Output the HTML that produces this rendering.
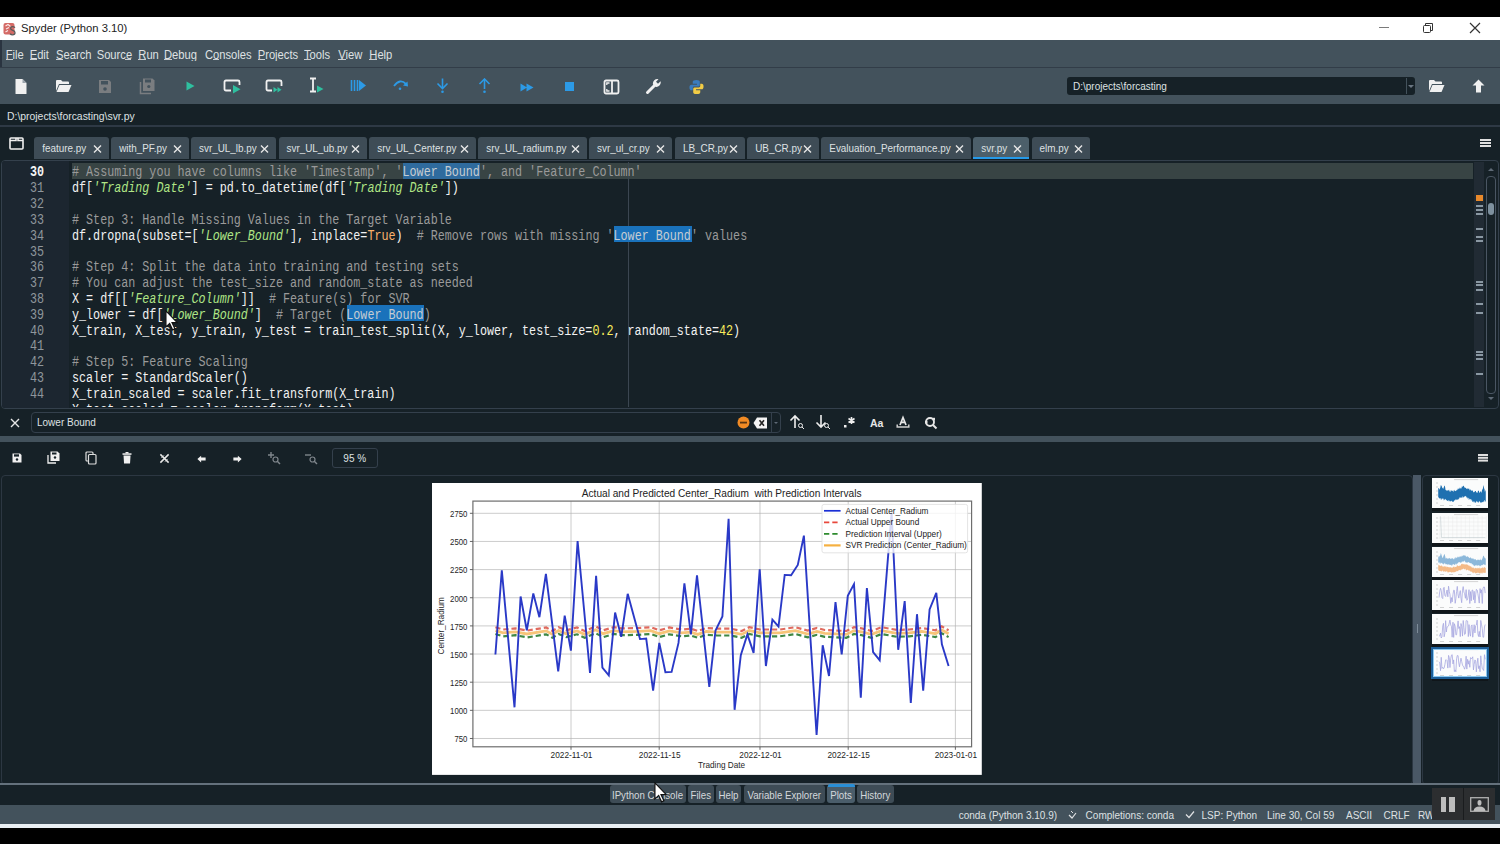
<!DOCTYPE html><html><head><meta charset="utf-8"><style>
*{margin:0;padding:0;box-sizing:border-box}
html,body{width:1500px;height:844px;overflow:hidden;background:#000}
body{position:relative;font-family:"Liberation Sans",sans-serif;color:#e0e1e3}
.a{position:absolute}
.ui{font-family:"Liberation Sans",sans-serif;white-space:nowrap}
.mono{font-family:"Liberation Mono",monospace;white-space:pre}
.menu span{position:absolute;top:0;font-size:11.2px;color:#dfe1e3;transform:scaleY(1.16);transform-origin:0 0}
.tab{position:absolute;top:137px;height:22px;background:#3e4c56;border-radius:3px 3px 0 0;font-size:9.9px;color:#dfe1e3}
.tab .t{position:absolute;left:8px;top:5.5px;transform:scaleY(1.14);transform-origin:0 9px}
.tab .x{position:absolute;top:6.5px;width:9px;height:10px}
.ln{position:absolute;left:0;width:44px;text-align:right;color:#8f969c;font-size:11.73px;transform:scaleY(1.2);transform-origin:0 0}
.cl{position:absolute;left:72px;font-size:11.73px;color:#f2f2f2;transform:scaleY(1.2);transform-origin:0 0}
.c{color:#9a9a9a}
.s{color:#b0e686;font-style:italic}
.b{color:#fab16c}
.n{color:#faed5c}
.hl{background:#1a72bb}
.tk{position:absolute;font-size:8px;color:#262626}
</style></head><body>
<div class="a" style="left:0;top:17px;width:1500px;height:23px;background:#fff"></div>
<svg class="a" style="left:3px;top:22px" width="13" height="14" viewBox="0 0 13 14">
<rect x="0.5" y="1" width="11" height="11.5" rx="2" fill="#d46a66"/>
<path d="M2.5 4 L5 2.5 L7.5 4.5 M3 7 L6 5.5 M2.5 10 L5 8.5" stroke="#fbe9e8" stroke-width="1.1" fill="none"/>
<path d="M12 5.6 Q11 4.6 9.5 4.6 Q7.6 4.6 7.6 6.3 Q7.6 7.8 9.8 8.4 Q12 9 12 10.7 Q12 12.8 9.6 12.8 Q8 12.8 7 11.8" stroke="#5a5a5a" stroke-width="1.3" fill="none"/></svg>
<div class="a ui" style="left:21px;top:22px;font-size:11.25px;color:#222">Spyder (Python 3.10)</div>
<div class="a" style="left:1379px;top:27px;width:9.5px;height:1.3px;background:#7a7a7a"></div>
<svg class="a" style="left:1422px;top:22px" width="12" height="12" viewBox="0 0 12 12"><rect x="1.5" y="3.5" width="7" height="7" rx="1" fill="none" stroke="#333"/><path d="M3.5 3.5 V1.5 H10.5 V8.5 H8.5" fill="none" stroke="#333"/></svg>
<svg class="a" style="left:1469px;top:22px" width="12" height="12" viewBox="0 0 12 12"><path d="M1 1 L11 11 M11 1 L1 11" stroke="#333" stroke-width="1.2"/></svg>
<div class="a" style="left:0;top:40px;width:1500px;height:27px;background:#43525c"></div>
<div class="a" style="left:0;top:40px;width:2px;height:27px;background:#2a3440"></div>
<div class="a" style="left:0;top:67px;width:1500px;height:1px;background:#323d48"></div>
<div class="a menu" style="left:0;top:46.5px;width:500px;height:16px">
<span style="left:5.7px">File</span>
<span style="left:29.7px">Edit</span>
<span style="left:56px">Search</span>
<span style="left:96.7px">Source</span>
<span style="left:138.3px">Run</span>
<span style="left:164px">Debug</span>
<span style="left:205px">Consoles</span>
<span style="left:257.7px">Projects</span>
<span style="left:304px">Tools</span>
<span style="left:338.3px">View</span>
<span style="left:369.3px">Help</span>
</div>
<div class="a" style="left:5.7px;top:59.2px;width:7px;height:1px;background:#c9cdd0"></div>
<div class="a" style="left:29.7px;top:59.2px;width:7px;height:1px;background:#c9cdd0"></div>
<div class="a" style="left:56px;top:59.2px;width:7px;height:1px;background:#c9cdd0"></div>
<div class="a" style="left:124.7px;top:59.2px;width:6px;height:1px;background:#c9cdd0"></div>
<div class="a" style="left:138.3px;top:59.2px;width:8px;height:1px;background:#c9cdd0"></div>
<div class="a" style="left:164px;top:59.2px;width:8px;height:1px;background:#c9cdd0"></div>
<div class="a" style="left:213px;top:59.2px;width:6px;height:1px;background:#c9cdd0"></div>
<div class="a" style="left:257.7px;top:59.2px;width:7px;height:1px;background:#c9cdd0"></div>
<div class="a" style="left:304px;top:59.2px;width:7px;height:1px;background:#c9cdd0"></div>
<div class="a" style="left:338.3px;top:59.2px;width:8px;height:1px;background:#c9cdd0"></div>
<div class="a" style="left:369.3px;top:59.2px;width:8px;height:1px;background:#c9cdd0"></div>
<div class="a" style="left:0;top:68px;width:1500px;height:36px;background:#43525c"></div>
<svg class="a" style="left:14px;top:78px" width="14" height="17" viewBox="0 0 14 17"><path d="M1.5 1 H8.5 L12.5 5 V15.5 Q12.5 16 12 16 H2 Q1.5 16 1.5 15.5 Z" fill="#f0f0f0"/><path d="M8.5 1 V5 H12.5" fill="#9aa3ab"/></svg>
<svg class="a" style="left:55px;top:79px" width="17" height="14" viewBox="0 0 17 14"><path d="M1 2 Q1 1 2 1 H6 L7.5 2.5 H13 Q14 2.5 14 3.5 V5 H4 L1 12 Z" fill="#f0f0f0"/><path d="M4.5 6 H16.5 L13.5 13 H1.5 Z" fill="#f0f0f0"/></svg>
<svg class="a" style="left:98px;top:79px" width="14" height="15" viewBox="0 0 14 15"><path d="M1 1 H11 L13 3 V14 H1 Z" fill="#7a7d80"/><rect x="3" y="2" width="7" height="3.5" fill="#43525c"/><circle cx="7" cy="10" r="1.8" fill="#43525c"/></svg>
<svg class="a" style="left:139px;top:77px" width="17" height="18" viewBox="0 0 17 18"><path d="M1.5 5 V16.5 H12" fill="none" stroke="#7a7d80" stroke-width="1.5"/><path d="M4 1.5 H13.5 L15.5 3.5 V14 H4 Z" fill="#7a7d80"/><rect x="6" y="2.5" width="6" height="3" fill="#43525c"/><circle cx="9.8" cy="9.5" r="1.6" fill="#43525c"/></svg>
<svg class="a" style="left:186px;top:81px" width="9" height="10" viewBox="0 0 9 10"><path d="M0.5 0.5 L8.5 5 L0.5 9.5 Z" fill="#2fbf9f"/></svg>
<svg class="a" style="left:223px;top:79px" width="19" height="15" viewBox="0 0 19 15"><path d="M8 11.5 H3 Q1.5 11.5 1.5 10 V3 Q1.5 1.5 3 1.5 H15 Q16.5 1.5 16.5 3 V6" fill="none" stroke="#f0f0f0" stroke-width="1.8"/><path d="M10 6 L17.5 10.3 L10 14.5 Z" fill="#2fbf9f"/></svg>
<svg class="a" style="left:265px;top:79px" width="19" height="15" viewBox="0 0 19 15"><path d="M7 11.5 H3 Q1.5 11.5 1.5 10 V3 Q1.5 1.5 3 1.5 H15 Q16.5 1.5 16.5 3 V7" fill="none" stroke="#f0f0f0" stroke-width="1.8"/><path d="M8.5 8 L12.5 10.8 L8.5 13.5 Z M12.5 8 L16.5 10.8 L12.5 13.5 Z" fill="#2fbf9f"/></svg>
<svg class="a" style="left:308px;top:77px" width="17" height="17" viewBox="0 0 17 17"><path d="M2 1.5 H8 M5 1.5 V14.5 M2 14.5 H8" fill="none" stroke="#f0f0f0" stroke-width="1.8"/><path d="M9 8.5 L15.5 12 L9 15.5 Z" fill="#2fbf9f"/></svg>
<svg class="a" style="left:350px;top:79px" width="17" height="13" viewBox="0 0 17 13"><path d="M1.5 1 V12 M4.5 1 V12 M7.5 1 V12" stroke="#2c9ae6" stroke-width="1.6"/><path d="M9 1 L16 6.5 L9 12 Z" fill="#2c9ae6"/></svg>
<svg class="a" style="left:392px;top:78px" width="17" height="13" viewBox="0 0 17 13"><path d="M2 8 Q8 0 14 6" fill="none" stroke="#2c9ae6" stroke-width="1.8"/><path d="M11 7.5 L16 8.5 L15.5 3.5 Z" fill="#2c9ae6"/><circle cx="8" cy="10.8" r="1.3" fill="#2c9ae6"/></svg>
<svg class="a" style="left:436px;top:78px" width="13" height="16" viewBox="0 0 13 16"><path d="M6.5 0.5 V10" stroke="#2c9ae6" stroke-width="1.6"/><path d="M1.5 5.5 L6.5 10.5 L11.5 5.5" fill="none" stroke="#2c9ae6" stroke-width="1.6"/><circle cx="6.5" cy="13.8" r="1.3" fill="#2c9ae6"/></svg>
<svg class="a" style="left:478px;top:78px" width="13" height="16" viewBox="0 0 13 16"><path d="M6.5 1.5 V11" stroke="#2c9ae6" stroke-width="1.6"/><path d="M1.5 6 L6.5 1 L11.5 6" fill="none" stroke="#2c9ae6" stroke-width="1.6"/><circle cx="6.5" cy="13.8" r="1.3" fill="#2c9ae6"/></svg>
<svg class="a" style="left:520px;top:83px" width="14" height="9" viewBox="0 0 14 9"><path d="M0.5 0.5 L7 4.5 L0.5 8.5 Z M6.5 0.5 L13.5 4.5 L6.5 8.5 Z" fill="#2c9ae6"/></svg>
<div class="a" style="left:565px;top:82px;width:9px;height:8.5px;background:#2c9ae6"></div>
<svg class="a" style="left:603px;top:78.5px" width="17" height="16" viewBox="0 0 17 16"><rect x="1.5" y="1.5" width="14" height="13" rx="1.5" fill="none" stroke="#f0f0f0" stroke-width="1.8"/><path d="M9 1.5 V14.5" stroke="#f0f0f0" stroke-width="1.8"/><path d="M6.5 4 H3.8 V6 M6.5 12 H3.8 V10" fill="none" stroke="#f0f0f0" stroke-width="1.3"/></svg>
<svg class="a" style="left:645px;top:78px" width="17" height="17" viewBox="0 0 17 17"><path d="M2.5 14.5 L9 8" stroke="#f0f0f0" stroke-width="3" stroke-linecap="round"/><path d="M8 6.5 A4.5 4.5 0 0 1 13.5 1.2 L11 3.8 L13 5.8 L15.6 3.3 A4.5 4.5 0 0 1 10.3 8.8 Z" fill="#f0f0f0"/></svg>
<svg class="a" style="left:689px;top:78.5px" width="15" height="16" viewBox="0 0 16 17"><path d="M8 1 Q4 1 4 3 V5 H8.5 V6 H2.5 Q0.5 6 0.5 9 Q0.5 12 2.5 12 H4 V9.5 Q4 8 5.5 8 H10 Q11.5 8 11.5 6.5 V3 Q11.5 1 8 1 Z" fill="#3a7cc0"/><path d="M8 16 Q12 16 12 14 V12 H7.5 V11 H13.5 Q15.5 11 15.5 8 Q15.5 5 13.5 5 H12 V7.5 Q12 9 10.5 9 H6 Q4.5 9 4.5 10.5 V14 Q4.5 16 8 16 Z" fill="#f2cc45"/></svg>
<div class="a" style="left:1067px;top:77px;width:348px;height:18px;background:#162127;border-radius:3px"></div>
<div class="a" style="left:1406px;top:78px;width:1px;height:16px;background:#43525c"></div>
<div class="a" style="left:1408px;top:85px;width:0;height:0;border-left:3px solid transparent;border-right:3px solid transparent;border-top:3px solid #6a7682"></div>
<div class="a ui" style="left:1073px;top:81px;font-size:10px;color:#dfe1e3">D:\projects\forcasting</div>
<svg class="a" style="left:1428px;top:79px" width="17" height="14" viewBox="0 0 17 14"><path d="M1 2 Q1 1 2 1 H6 L7.5 2.5 H13 Q14 2.5 14 3.5 V5 H4 L1 12 Z" fill="#f0f0f0"/><path d="M4.5 6 H16.5 L13.5 13 H1.5 Z" fill="#f0f0f0"/></svg>
<svg class="a" style="left:1472px;top:79px" width="13" height="14" viewBox="0 0 13 14"><path d="M6.5 0.5 L12.5 6.5 H9 V13.5 H4 V6.5 H0.5 Z" fill="#f0f0f0"/></svg>
<div class="a" style="left:0;top:104px;width:1500px;height:701px;background:#162127"></div>
<div class="a" style="left:0;top:125px;width:1500px;height:1.5px;background:#2e3945"></div>
<div class="a ui" style="left:7px;top:111px;font-size:10.4px;color:#dfe1e3">D:\projects\forcasting\svr.py</div>
<svg class="a" style="left:9px;top:137px" width="15" height="13" viewBox="0 0 15 13"><rect x="1" y="1" width="13" height="11" rx="1" fill="none" stroke="#f0f0f0" stroke-width="1.6"/><path d="M1 3.5 H7 V1 M9 1 V3.5 H14" fill="none" stroke="#f0f0f0" stroke-width="1.6"/></svg>
<div class="tab" style="left:34.2px;width:74.7px;background:#3e4c56"><span class="t">feature.py</span><svg class="x" style="left:58.7px" viewBox="0 0 9 10"><path d="M1 1.5 L8 8.5 M8 1.5 L1 8.5" stroke="#e6e6e6" stroke-width="1.4"/></svg></div>
<div class="tab" style="left:111.2px;width:77.5px;background:#3e4c56"><span class="t">with_PF.py</span><svg class="x" style="left:61.5px" viewBox="0 0 9 10"><path d="M1 1.5 L8 8.5 M8 1.5 L1 8.5" stroke="#e6e6e6" stroke-width="1.4"/></svg></div>
<div class="tab" style="left:191.0px;width:85.0px;background:#3e4c56"><span class="t">svr_UL_lb.py</span><svg class="x" style="left:69.0px" viewBox="0 0 9 10"><path d="M1 1.5 L8 8.5 M8 1.5 L1 8.5" stroke="#e6e6e6" stroke-width="1.4"/></svg></div>
<div class="tab" style="left:278.5px;width:88.2px;background:#3e4c56"><span class="t">svr_UL_ub.py</span><svg class="x" style="left:72.2px" viewBox="0 0 9 10"><path d="M1 1.5 L8 8.5 M8 1.5 L1 8.5" stroke="#e6e6e6" stroke-width="1.4"/></svg></div>
<div class="tab" style="left:369.3px;width:106.7px;background:#3e4c56"><span class="t">srv_UL_Center.py</span><svg class="x" style="left:90.7px" viewBox="0 0 9 10"><path d="M1 1.5 L8 8.5 M8 1.5 L1 8.5" stroke="#e6e6e6" stroke-width="1.4"/></svg></div>
<div class="tab" style="left:478.3px;width:108.5px;background:#3e4c56"><span class="t">srv_UL_radium.py</span><svg class="x" style="left:92.5px" viewBox="0 0 9 10"><path d="M1 1.5 L8 8.5 M8 1.5 L1 8.5" stroke="#e6e6e6" stroke-width="1.4"/></svg></div>
<div class="tab" style="left:589.0px;width:83.2px;background:#3e4c56"><span class="t">svr_ul_cr.py</span><svg class="x" style="left:67.2px" viewBox="0 0 9 10"><path d="M1 1.5 L8 8.5 M8 1.5 L1 8.5" stroke="#e6e6e6" stroke-width="1.4"/></svg></div>
<div class="tab" style="left:675.0px;width:69.5px;background:#3e4c56"><span class="t">LB_CR.py</span><svg class="x" style="left:53.5px" viewBox="0 0 9 10"><path d="M1 1.5 L8 8.5 M8 1.5 L1 8.5" stroke="#e6e6e6" stroke-width="1.4"/></svg></div>
<div class="tab" style="left:747.2px;width:72.0px;background:#3e4c56"><span class="t">UB_CR.py</span><svg class="x" style="left:56.0px" viewBox="0 0 9 10"><path d="M1 1.5 L8 8.5 M8 1.5 L1 8.5" stroke="#e6e6e6" stroke-width="1.4"/></svg></div>
<div class="tab" style="left:821.3px;width:150.2px;background:#3e4c56"><span class="t">Evaluation_Performance.py</span><svg class="x" style="left:134.2px" viewBox="0 0 9 10"><path d="M1 1.5 L8 8.5 M8 1.5 L1 8.5" stroke="#e6e6e6" stroke-width="1.4"/></svg></div>
<div class="tab" style="left:973.3px;width:56.0px;background:#4c5f6a"><span class="t">svr.py</span><svg class="x" style="left:40.0px" viewBox="0 0 9 10"><path d="M1 1.5 L8 8.5 M8 1.5 L1 8.5" stroke="#e6e6e6" stroke-width="1.4"/></svg></div>
<div class="a" style="left:973.3px;top:157px;width:56.0px;height:2px;background:#259ae9"></div>
<div class="tab" style="left:1031.5px;width:58.5px;background:#3e4c56"><span class="t">elm.py</span><svg class="x" style="left:42.5px" viewBox="0 0 9 10"><path d="M1 1.5 L8 8.5 M8 1.5 L1 8.5" stroke="#e6e6e6" stroke-width="1.4"/></svg></div>
<div class="a" style="left:1480px;top:139px;width:11px;height:2px;background:#e0e0e0;box-shadow:0 3px 0 #e0e0e0,0 6px 0 #e0e0e0"></div>
<div class="a" style="left:1px;top:160px;width:1498px;height:249px;border:1px solid #34404c;border-radius:4px;background:#162127"></div>
<div class="a" style="left:2px;top:161px;width:67px;height:247px;background:#1c2630;border-radius:3px 0 0 3px"></div>
<div class="a" style="left:72px;top:163px;width:1401px;height:16px;background:#384444"></div>
<div class="a" style="left:628px;top:162px;width:1px;height:245px;background:#3b4651"></div>
<div class="a" style="left:0;top:161px;width:1473px;height:246px;overflow:hidden">
<div class="ln mono" style="top:3.40px;color:#f4f4f4;font-weight:bold">30</div>
<div class="a" style="left:402.88px;top:1.80px;width:77.44px;height:16px;background:#2f6b9e"></div>
<div class="cl mono" style="top:3.40px"><span class="c"># Assuming you have columns like &#x27;Timestamp&#x27;, &#x27;</span><span style="color:#c5ccd2">Lower Bound</span><span class="c">&#x27;, and &#x27;Feature_Column&#x27;</span></div>
<div class="ln mono" style="top:19.22px;">31</div>
<div class="cl mono" style="top:19.22px">df[<span class="s">&#x27;Trading Date&#x27;</span>] = pd.to_datetime(df[<span class="s">&#x27;Trading Date&#x27;</span>])</div>
<div class="ln mono" style="top:35.04px;">32</div>
<div class="cl mono" style="top:35.04px"></div>
<div class="ln mono" style="top:50.86px;">33</div>
<div class="cl mono" style="top:50.86px"><span class="c"># Step 3: Handle Missing Values in the Target Variable</span></div>
<div class="ln mono" style="top:66.68px;">34</div>
<div class="a" style="left:614.08px;top:65.08px;width:77.44px;height:16px;background:#1a72bb"></div>
<div class="cl mono" style="top:66.68px">df.dropna(subset=[<span class="s">&#x27;Lower_Bound&#x27;</span>], inplace=<span class="b">True</span>)  <span class="c"># Remove rows with missing &#x27;</span><span style="color:#c5ccd2">Lower Bound</span><span class="c">&#x27; values</span></div>
<div class="ln mono" style="top:82.50px;">35</div>
<div class="cl mono" style="top:82.50px"></div>
<div class="ln mono" style="top:98.32px;">36</div>
<div class="cl mono" style="top:98.32px"><span class="c"># Step 4: Split the data into training and testing sets</span></div>
<div class="ln mono" style="top:114.14px;">37</div>
<div class="cl mono" style="top:114.14px"><span class="c"># You can adjust the test_size and random_state as needed</span></div>
<div class="ln mono" style="top:129.96px;">38</div>
<div class="cl mono" style="top:129.96px">X = df[[<span class="s">&#x27;Feature_Column&#x27;</span>]]  <span class="c"># Feature(s) for SVR</span></div>
<div class="ln mono" style="top:145.78px;">39</div>
<div class="a" style="left:346.56px;top:144.18px;width:77.44px;height:16px;background:#1a72bb"></div>
<div class="cl mono" style="top:145.78px">y_lower = df[<span class="s">&#x27;Lower_Bound&#x27;</span>]  <span class="c"># Target (</span><span style="color:#c5ccd2">Lower Bound</span><span class="c">)</span></div>
<div class="ln mono" style="top:161.60px;">40</div>
<div class="cl mono" style="top:161.60px">X_train, X_test, y_train, y_test = train_test_split(X, y_lower, test_size=<span class="n">0.2</span>, random_state=<span class="n">42</span>)</div>
<div class="ln mono" style="top:177.42px;">41</div>
<div class="cl mono" style="top:177.42px"></div>
<div class="ln mono" style="top:193.24px;">42</div>
<div class="cl mono" style="top:193.24px"><span class="c"># Step 5: Feature Scaling</span></div>
<div class="ln mono" style="top:209.06px;">43</div>
<div class="cl mono" style="top:209.06px">scaler = StandardScaler()</div>
<div class="ln mono" style="top:224.88px;">44</div>
<div class="cl mono" style="top:224.88px">X_train_scaled = scaler.fit_transform(X_train)</div>
<div class="cl mono" style="top:240.70px">X_test_scaled = scaler.transform(X_test)</div>
</div>
<div class="a" style="left:1474.4px;top:162px;width:9.6px;height:245px;background:#212b34"></div>
<div class="a" style="left:1475.8px;top:204.7px;width:7px;height:2px;background:#8a98a3"></div>
<div class="a" style="left:1475.8px;top:209.0px;width:7px;height:2px;background:#8a98a3"></div>
<div class="a" style="left:1475.8px;top:213.0px;width:7px;height:2px;background:#8a98a3"></div>
<div class="a" style="left:1475.8px;top:227.7px;width:7px;height:2px;background:#8a98a3"></div>
<div class="a" style="left:1475.8px;top:235.7px;width:7px;height:2px;background:#8a98a3"></div>
<div class="a" style="left:1475.8px;top:240.3px;width:7px;height:2px;background:#8a98a3"></div>
<div class="a" style="left:1475.8px;top:280.7px;width:7px;height:2px;background:#8a98a3"></div>
<div class="a" style="left:1475.8px;top:284.0px;width:7px;height:2px;background:#8a98a3"></div>
<div class="a" style="left:1475.8px;top:288.7px;width:7px;height:2px;background:#8a98a3"></div>
<div class="a" style="left:1475.8px;top:303.0px;width:7px;height:2px;background:#8a98a3"></div>
<div class="a" style="left:1475.8px;top:311.7px;width:7px;height:2px;background:#8a98a3"></div>
<div class="a" style="left:1475.8px;top:350.7px;width:7px;height:2px;background:#8a98a3"></div>
<div class="a" style="left:1475.8px;top:354.0px;width:7px;height:2px;background:#8a98a3"></div>
<div class="a" style="left:1475.8px;top:358.3px;width:7px;height:2px;background:#8a98a3"></div>
<div class="a" style="left:1475.8px;top:372.7px;width:7px;height:2px;background:#8a98a3"></div>
<div class="a" style="left:1475.8px;top:194.8px;width:7px;height:6px;background:#e8892b"></div>
<div class="a" style="left:1486px;top:175.5px;width:9.5px;height:218px;border:1px solid #4a5663;border-radius:4px"></div>
<div class="a" style="left:1487.6px;top:202.5px;width:6.8px;height:12px;background:#7d909e;border-radius:3.4px"></div>
<div class="a" style="left:1487.5px;top:168px;width:0;height:0;border-left:3.5px solid transparent;border-right:3.5px solid transparent;border-bottom:3px solid #5e6a76"></div>
<div class="a" style="left:1487.5px;top:397px;width:0;height:0;border-left:3.5px solid transparent;border-right:3.5px solid transparent;border-top:3px solid #5e6a76"></div>
<div class="a" style="left:0;top:409px;width:1500px;height:27px;background:#162127"></div>
<svg class="a" style="left:10px;top:418px" width="10" height="10" viewBox="0 0 10 10"><path d="M1 1 L9 9 M9 1 L1 9" stroke="#e6e6e6" stroke-width="1.4"/></svg>
<div class="a" style="left:31px;top:412px;width:750px;height:20.5px;border:1px solid #34404c;border-radius:4px"></div>
<div class="a" style="left:771px;top:413px;width:1px;height:18.5px;background:#34404c"></div>
<div class="a" style="left:774px;top:421.5px;width:0;height:0;border-left:2.5px solid transparent;border-right:2.5px solid transparent;border-top:2.5px solid #5e6a76"></div>
<div class="a ui" style="left:37px;top:416.5px;font-size:10px;color:#dfe1e3">Lower Bound</div>
<svg class="a" style="left:737px;top:416px" width="13" height="13" viewBox="0 0 13 13"><circle cx="6.5" cy="6.5" r="6" fill="#f08a24"/><rect x="3" y="5.7" width="7" height="1.8" fill="#5a3510"/></svg>
<svg class="a" style="left:753px;top:416.5px" width="15" height="12" viewBox="0 0 15 12"><path d="M4 0.5 H14 V11.5 H4 L0.5 6 Z" fill="#f4f4f4"/><path d="M6.5 3.3 L11 8.7 M11 3.3 L6.5 8.7" stroke="#222" stroke-width="1.6"/></svg>
<svg class="a" style="left:789px;top:414px" width="16" height="16" viewBox="0 0 16 16"><path d="M6 14 V2 M1.5 6.5 L6 2 L10.5 6.5" fill="none" stroke="#eee" stroke-width="1.6"/><circle cx="11.5" cy="11.5" r="2" fill="none" stroke="#eee" stroke-width="1"/><path d="M13 13 L15 15" stroke="#eee" stroke-width="1"/></svg>
<svg class="a" style="left:815px;top:414px" width="16" height="16" viewBox="0 0 16 16"><path d="M6 1 V13 M1.5 8.5 L6 13 L10.5 8.5" fill="none" stroke="#eee" stroke-width="1.6"/><circle cx="11.5" cy="11.5" r="2" fill="none" stroke="#eee" stroke-width="1"/><path d="M13 13 L15 15" stroke="#eee" stroke-width="1"/></svg>
<svg class="a" style="left:843px;top:415px" width="14" height="14" viewBox="0 0 14 14"><rect x="1" y="10" width="2.5" height="2.5" fill="#eee"/><path d="M8.5 2 V9 M5.5 3.5 L11.5 7.5 M11.5 3.5 L5.5 7.5" stroke="#eee" stroke-width="1.6"/></svg>
<div class="a ui" style="left:870px;top:416.5px;font-size:10.5px;font-weight:bold;color:#e6e6e6">Aa</div>
<svg class="a" style="left:896px;top:414px" width="14" height="15" viewBox="0 0 14 15"><path d="M4 11 L7 3.5 L10 11 M5.3 8.3 H8.7" fill="none" stroke="#e6e6e6" stroke-width="1.7"/><path d="M1.2 10.5 V13 H12.8 V10.5" fill="none" stroke="#d0d0d0" stroke-width="1.5"/></svg>
<svg class="a" style="left:924px;top:415.5px" width="14" height="14" viewBox="0 0 14 14"><circle cx="6" cy="6" r="4" fill="none" stroke="#e6e6e6" stroke-width="1.9"/><rect x="1" y="5" width="2.5" height="2.5" fill="#e6e6e6"/><rect x="8.5" y="1.8" width="2.5" height="2.5" fill="#e6e6e6"/><path d="M9 9 L12.5 12.5" stroke="#e6e6e6" stroke-width="2"/></svg>
<div class="a" style="left:0;top:435.5px;width:1500px;height:6.5px;background:#43525c"></div>
<div class="a" style="left:0;top:442px;width:1500px;height:363px;background:#162127"></div>
<svg class="a" style="left:12px;top:453px" width="10" height="10" viewBox="0 0 10 10"><path d="M0.5 0.5 H8 L9.5 2 V9.5 H0.5 Z" fill="#f0f0f0"/><rect x="2" y="1.3" width="5" height="2.3" fill="#162127"/><circle cx="5" cy="6.5" r="1.2" fill="#162127"/></svg>
<svg class="a" style="left:47px;top:451px" width="13" height="13" viewBox="0 0 13 13"><path d="M1 4 V12 H9" fill="none" stroke="#f0f0f0" stroke-width="1.3"/><path d="M3.5 0.5 H10.5 L12.5 2.5 V10 H3.5 Z" fill="#f0f0f0"/><rect x="5" y="1.5" width="4.5" height="2" fill="#162127"/><circle cx="8" cy="6.5" r="1.2" fill="#162127"/></svg>
<svg class="a" style="left:85px;top:451px" width="12" height="14" viewBox="0 0 12 14"><rect x="1" y="1" width="7" height="9" rx="1" fill="none" stroke="#ddd" stroke-width="1.2"/><rect x="3.5" y="3.5" width="7.5" height="9.5" rx="1" fill="#162127" stroke="#ddd" stroke-width="1.2"/></svg>
<svg class="a" style="left:122px;top:452px" width="10" height="12" viewBox="0 0 10 12"><rect x="0.5" y="1.3" width="9" height="1.5" fill="#f0f0f0"/><rect x="3.5" y="0" width="3" height="1.5" fill="#f0f0f0"/><path d="M1.5 3.5 H8.5 L8 11.5 H2 Z" fill="#f0f0f0"/></svg>
<svg class="a" style="left:159px;top:453px" width="11" height="11" viewBox="0 0 12 12"><path d="M1.5 1.5 L10.5 10.5 M10.5 1.5 L1.5 10.5" stroke="#e8e8e8" stroke-width="1.6"/><path d="M2.5 5.5 L5.5 2.5 M6.5 9.5 L9.5 6.5" stroke="#e8e8e8" stroke-width="0.9"/></svg>
<svg class="a" style="left:196.5px;top:454.5px" width="9" height="8" viewBox="0 0 12 10"><path d="M0.5 5 L5.5 0.5 V3 H11.5 V7 H5.5 V9.5 Z" fill="#f0f0f0"/></svg>
<svg class="a" style="left:232.5px;top:454.5px" width="9" height="8" viewBox="0 0 12 10"><path d="M11.5 5 L6.5 0.5 V3 H0.5 V7 H6.5 V9.5 Z" fill="#f0f0f0"/></svg>
<svg class="a" style="left:267px;top:451px" width="14" height="14" viewBox="0 0 14 14"><path d="M4 1 V7 M1 4 H7" stroke="#7f868c" stroke-width="1.4"/><circle cx="8.5" cy="8.5" r="2.5" fill="none" stroke="#7f868c" stroke-width="1.2"/><path d="M10.3 10.3 L13 13" stroke="#7f868c" stroke-width="1.4"/></svg>
<svg class="a" style="left:304px;top:451px" width="14" height="14" viewBox="0 0 14 14"><path d="M1 4 H7" stroke="#7f868c" stroke-width="1.4"/><circle cx="8.5" cy="8.5" r="2.5" fill="none" stroke="#7f868c" stroke-width="1.2"/><path d="M10.3 10.3 L13 13" stroke="#7f868c" stroke-width="1.4"/></svg>
<div class="a" style="left:331.5px;top:448px;width:46.5px;height:20px;border:1px solid #34404c;border-radius:3px"></div>
<div class="a ui" style="left:331.5px;top:453px;width:46.5px;text-align:center;font-size:10px;color:#dfe1e3">95 %</div>
<div class="a" style="left:1478px;top:454px;width:10px;height:1.6px;background:#e0e0e0;box-shadow:0 2.8px 0 #e0e0e0,0 5.6px 0 #e0e0e0"></div>
<div class="a" style="left:1px;top:474.5px;width:1412px;height:310px;border:1px solid #2c3742;border-radius:4px"></div>
<div class="a" style="left:1413.3px;top:474.5px;width:8px;height:310px;background:#4a5866"></div>
<div class="a" style="left:1416.8px;top:624px;width:1px;height:9px;background:#7d8b98"></div>
<div class="a" style="left:1422px;top:474.5px;width:77px;height:310px;border:1px solid #2c3742;border-radius:4px"></div>
<div class="a" style="left:0;top:783.2px;width:1500px;height:1.6px;background:#64717c"></div>
<svg class="a" style="left:432.4px;top:483.2px" width="549.8" height="291.9" viewBox="432.4 483.2 549.8 291.9">
<rect x="432.4" y="483.2" width="549.8" height="291.9" fill="#ffffff"/>
<path d="M473.3 738.70 H972.0 M473.3 710.55 H972.0 M473.3 682.40 H972.0 M473.3 654.25 H972.0 M473.3 626.10 H972.0 M473.3 597.95 H972.0 M473.3 569.80 H972.0 M473.3 541.65 H972.0 M473.3 513.50 H972.0 M571.4 501.3 V747.0 M659.6 501.3 V747.0 M760.4 501.3 V747.0 M848.6 501.3 V747.0 M955.8 501.3 V747.0" stroke="#b0b0b0" stroke-width="0.9" opacity="0.72" fill="none"/>
<polyline points="495.8,630.8 503.5,633.1 515.8,632.0 527.4,634.2 546.6,631.1 552.8,634.6 559.0,630.8 566.6,633.9 577.4,631.1 585.1,634.6 596.0,630.0 603.6,633.9 614.2,630.8 622.0,632.0 638.9,631.6 651.2,630.8 659.7,633.9 669.7,631.1 682.0,633.1 691.3,632.3 698.2,634.6 706.7,631.6 717.4,632.3 731.3,632.3 742.0,634.6 749.6,630.8 760.4,633.1 780.5,633.1 795.9,630.8 808.2,634.2 817.4,631.6 825.1,633.6 846.7,634.6 854.4,630.8 862.0,632.0 872.0,634.6 882.0,630.8 897.4,633.6 909.7,633.1 922.0,631.6 931.3,633.1 935.9,633.9 942.0,630.0 949.0,633.9" fill="none" stroke="#f5b556" stroke-width="2.8" opacity="0.8"/>
<polyline points="495.8,627.4 503.5,629.7 515.8,628.6 527.4,630.8 546.6,627.7 552.8,631.2 559.0,627.4 566.6,630.5 577.4,627.7 585.1,631.2 596.0,626.6 603.6,630.5 614.2,627.4 622.0,628.6 638.9,628.2 651.2,627.4 659.7,630.5 669.7,627.7 682.0,629.7 691.3,628.9 698.2,631.2 706.7,628.2 717.4,628.9 731.3,628.9 742.0,631.2 749.6,627.4 760.4,629.7 780.5,629.7 795.9,627.4 808.2,630.8 817.4,628.2 825.1,630.2 846.7,631.2 854.4,627.4 862.0,628.6 872.0,631.2 882.0,627.4 897.4,630.2 909.7,629.7 922.0,628.2 931.3,629.7 935.9,630.5 942.0,626.6 949.0,630.5" fill="none" stroke="#dc5a4c" stroke-width="2.2" stroke-dasharray="5.2 3" opacity="0.9"/>
<polyline points="495.8,634.2 503.5,636.5 515.8,635.4 527.4,637.6 546.6,634.5 552.8,638.0 559.0,634.2 566.6,637.3 577.4,634.5 585.1,638.0 596.0,633.4 603.6,637.3 614.2,634.2 622.0,635.4 638.9,635.0 651.2,634.2 659.7,637.3 669.7,634.5 682.0,636.5 691.3,635.7 698.2,638.0 706.7,635.0 717.4,635.7 731.3,635.7 742.0,638.0 749.6,634.2 760.4,636.5 780.5,636.5 795.9,634.2 808.2,637.6 817.4,635.0 825.1,637.0 846.7,638.0 854.4,634.2 862.0,635.4 872.0,638.0 882.0,634.2 897.4,637.0 909.7,636.5 922.0,635.0 931.3,636.5 935.9,637.3 942.0,633.4 949.0,637.3" fill="none" stroke="#2f7d33" stroke-width="2.2" stroke-dasharray="5.2 3" opacity="0.92"/>
<polyline points="495.8,654.7 502.2,570.5 514.9,707.5 521.0,596.7 527.2,630.5 533.7,593.6 539.8,617.4 546.3,574.0 558.6,671.6 565.1,615.9 571.3,650.8 578.0,541.2 590.4,673.1 596.5,575.9 602.8,667.8 609.2,675.5 615.5,612.8 621.6,637.0 628.1,594.0 640.4,639.3 646.6,638.8 653.5,690.9 659.7,643.1 665.8,672.4 672.0,672.1 678.9,643.1 684.8,583.6 691.3,634.6 697.4,575.5 709.7,687.0 715.9,630.8 722.8,616.7 729.0,518.9 735.0,710.0 741.2,655.4 747.8,634.6 754.0,653.1 760.1,569.4 766.3,666.2 772.8,619.8 778.9,626.7 785.1,575.1 791.5,575.5 798.2,565.1 804.3,535.8 817.0,735.2 823.1,645.4 829.4,676.2 835.9,602.3 842.1,654.7 848.2,595.9 854.4,584.3 861.2,697.8 867.3,588.2 873.5,652.3 880.1,660.4 892.0,513.0 898.6,650.0 905.1,601.3 911.2,703.2 917.4,614.4 923.6,690.9 930.0,609.7 936.7,593.1 942.3,644.6 949.0,666.2" fill="none" stroke="#1f2ec4" stroke-width="1.9" stroke-linejoin="miter" opacity="0.95"/>
<rect x="473.3" y="501.3" width="498.7" height="245.7" fill="none" stroke="#6e6e6e" stroke-width="1.2"/>
<path d="M470.3 738.70 H473.3 M470.3 710.55 H473.3 M470.3 682.40 H473.3 M470.3 654.25 H473.3 M470.3 626.10 H473.3 M470.3 597.95 H473.3 M470.3 569.80 H473.3 M470.3 541.65 H473.3 M470.3 513.50 H473.3 M571.4 747.0 V750.0 M659.6 747.0 V750.0 M760.4 747.0 V750.0 M848.6 747.0 V750.0 M955.8 747.0 V750.0" stroke="#555" stroke-width="0.9"/>
<rect x="822.4" y="504.6" width="145.60000000000002" height="48.39999999999998" rx="2" fill="#ffffff" fill-opacity="0.8" stroke="#dddddd" stroke-width="0.8"/>
<path d="M824.4 511 H841" stroke="#1a2fd6" stroke-width="1.7"/>
<text transform="translate(846 513.90) scale(1 1.14)" font-family="Liberation Sans" font-size="8.25" fill="#222">Actual Center_Radium</text>
<path d="M824.4 522.6 H841" stroke="#e8483c" stroke-width="1.7" stroke-dasharray="5.3 3"/>
<text transform="translate(846 525.50) scale(1 1.14)" font-family="Liberation Sans" font-size="8.25" fill="#222">Actual Upper Bound</text>
<path d="M824.4 534 H841" stroke="#2e8b2e" stroke-width="1.7" stroke-dasharray="5.3 3"/>
<text transform="translate(846 536.90) scale(1 1.14)" font-family="Liberation Sans" font-size="8.25" fill="#222">Prediction Interval (Upper)</text>
<path d="M824.4 545.6 H841" stroke="#f5b041" stroke-width="2.2"/>
<text transform="translate(846 548.50) scale(1 1.14)" font-family="Liberation Sans" font-size="8.25" fill="#222">SVR Prediction (Center_Radium)</text>
<text transform="translate(467.8 742.60) scale(1 1.22)" text-anchor="end" font-family="Liberation Sans" font-size="7.8" fill="#1e1e1e">750</text>
<text transform="translate(467.8 714.45) scale(1 1.22)" text-anchor="end" font-family="Liberation Sans" font-size="7.8" fill="#1e1e1e">1000</text>
<text transform="translate(467.8 686.30) scale(1 1.22)" text-anchor="end" font-family="Liberation Sans" font-size="7.8" fill="#1e1e1e">1250</text>
<text transform="translate(467.8 658.15) scale(1 1.22)" text-anchor="end" font-family="Liberation Sans" font-size="7.8" fill="#1e1e1e">1500</text>
<text transform="translate(467.8 630.00) scale(1 1.22)" text-anchor="end" font-family="Liberation Sans" font-size="7.8" fill="#1e1e1e">1750</text>
<text transform="translate(467.8 601.85) scale(1 1.22)" text-anchor="end" font-family="Liberation Sans" font-size="7.8" fill="#1e1e1e">2000</text>
<text transform="translate(467.8 573.70) scale(1 1.22)" text-anchor="end" font-family="Liberation Sans" font-size="7.8" fill="#1e1e1e">2250</text>
<text transform="translate(467.8 545.55) scale(1 1.22)" text-anchor="end" font-family="Liberation Sans" font-size="7.8" fill="#1e1e1e">2500</text>
<text transform="translate(467.8 517.40) scale(1 1.22)" text-anchor="end" font-family="Liberation Sans" font-size="7.8" fill="#1e1e1e">2750</text>
<text transform="translate(571.9 757.9) scale(1 1.18)" text-anchor="middle" font-family="Liberation Sans" font-size="8.3" fill="#1e1e1e">2022-11-01</text>
<text transform="translate(660.1 757.9) scale(1 1.18)" text-anchor="middle" font-family="Liberation Sans" font-size="8.3" fill="#1e1e1e">2022-11-15</text>
<text transform="translate(760.9 757.9) scale(1 1.18)" text-anchor="middle" font-family="Liberation Sans" font-size="8.3" fill="#1e1e1e">2022-12-01</text>
<text transform="translate(849.1 757.9) scale(1 1.18)" text-anchor="middle" font-family="Liberation Sans" font-size="8.3" fill="#1e1e1e">2022-12-15</text>
<text transform="translate(956.3 757.9) scale(1 1.18)" text-anchor="middle" font-family="Liberation Sans" font-size="8.3" fill="#1e1e1e">2023-01-01</text>
<text transform="translate(722 768.5) scale(1 1.2)" text-anchor="middle" font-family="Liberation Sans" font-size="8.2" fill="#262626">Trading Date</text>
<text transform="translate(444.8 626) rotate(-90) scale(1 1.2)" text-anchor="middle" font-family="Liberation Sans" font-size="8.2" fill="#262626">Center_Radium</text>
<text x="722" y="497.5" text-anchor="middle" font-family="Liberation Sans" font-size="10.15" fill="#222" style="white-space:pre">Actual and Predicted Center_Radium  with Prediction Intervals</text>
</svg>
<div class="a" style="left:1432px;top:508.3px;width:56.2px;height:3px;background:#10161a"></div>
<svg class="a" style="left:1432px;top:478.3px" width="56.2" height="30" viewBox="0 0 56 30" preserveAspectRatio="none">
<rect width="56" height="30" fill="#fbfcfc"/>
<path d="M22 1.6 H46 M4 5 H6 M4 9 H6 M4 13 H6 M4 17 H6 M4 21 H6 M4 25 H6 M8 27.5 H12 M17 27.5 H21 M26 27.5 H30 M35 27.5 H39 M44 27.5 H48" stroke="#c8c8c8" stroke-width="0.8"/>
<polygon points="6.20,10.69 6.63,9.98 7.06,10.37 7.49,11.66 7.92,10.76 8.35,9.27 8.79,6.97 9.22,7.52 9.65,7.88 10.08,9.62 10.51,10.09 10.94,10.49 11.37,10.86 11.80,9.04 12.23,7.95 12.66,7.51 13.09,9.36 13.53,12.20 13.96,11.66 14.39,12.68 14.82,12.43 15.25,11.68 15.68,13.16 16.11,12.56 16.54,12.16 16.97,11.60 17.40,13.06 17.83,13.78 18.27,14.12 18.70,12.36 19.13,12.14 19.56,12.65 19.99,12.99 20.42,12.40 20.85,13.13 21.28,13.98 21.71,12.34 22.14,11.72 22.57,12.63 23.01,13.35 23.44,12.81 23.87,12.90 24.30,12.54 24.73,11.70 25.16,12.30 25.59,10.94 26.02,10.09 26.45,11.26 26.88,10.88 27.31,9.20 27.75,10.97 28.18,10.64 28.61,9.57 29.04,10.85 29.47,9.76 29.90,8.12 30.33,9.07 30.76,8.52 31.19,7.81 31.62,7.73 32.05,8.79 32.49,9.56 32.92,9.90 33.35,9.76 33.78,9.67 34.21,10.75 34.64,10.73 35.07,11.16 35.50,9.92 35.93,11.07 36.36,11.03 36.79,10.06 37.23,11.27 37.66,12.46 38.09,12.06 38.52,11.09 38.95,13.35 39.38,12.33 39.81,12.54 40.24,12.82 40.67,12.23 41.10,13.98 41.53,14.46 41.97,13.68 42.40,14.20 42.83,13.02 43.26,12.93 43.69,13.04 44.12,14.53 44.55,14.23 44.98,15.07 45.41,14.51 45.84,12.78 46.27,12.85 46.71,12.82 47.14,14.68 47.57,14.75 48.00,13.70 48.43,13.18 48.86,13.67 49.29,14.97 49.72,12.79 50.15,11.62 50.58,11.11 51.01,8.79 51.45,7.07 51.88,10.20 52.31,11.09 52.74,13.92 53.17,11.86 53.60,13.63 53.60,23.57 53.17,23.63 52.74,22.11 52.31,22.28 51.88,24.34 51.45,23.08 51.01,24.21 50.58,24.30 50.15,23.64 49.72,24.52 49.29,24.33 48.86,24.80 48.43,23.98 48.00,25.01 47.57,23.26 47.14,23.29 46.71,23.62 46.27,25.16 45.84,23.79 45.41,24.39 44.98,23.33 44.55,22.69 44.12,23.89 43.69,24.43 43.26,24.58 42.83,25.01 42.40,23.08 41.97,24.46 41.53,24.31 41.10,23.05 40.67,23.63 40.24,24.09 39.81,21.47 39.38,21.52 38.95,23.29 38.52,21.07 38.09,21.08 37.66,20.43 37.23,21.14 36.79,22.17 36.36,19.75 35.93,20.06 35.50,19.32 35.07,20.91 34.64,19.39 34.21,18.63 33.78,18.15 33.35,18.19 32.92,17.72 32.49,18.90 32.05,18.27 31.62,19.41 31.19,19.51 30.76,17.84 30.33,19.40 29.90,19.73 29.47,19.60 29.04,19.41 28.61,19.20 28.18,19.94 27.75,19.49 27.31,19.47 26.88,21.48 26.45,20.49 26.02,21.80 25.59,22.03 25.16,21.12 24.73,22.36 24.30,20.98 23.87,22.47 23.44,21.02 23.01,22.06 22.57,22.76 22.14,21.98 21.71,23.94 21.28,23.39 20.85,23.48 20.42,24.36 19.99,23.08 19.56,23.37 19.13,22.61 18.70,23.21 18.27,23.39 17.83,22.88 17.40,23.50 16.97,21.84 16.54,22.20 16.11,23.56 15.68,22.71 15.25,22.92 14.82,21.82 14.39,22.43 13.96,21.93 13.53,21.27 13.09,20.81 12.66,21.48 12.23,21.90 11.80,22.38 11.37,20.53 10.94,20.86 10.51,20.15 10.08,20.92 9.65,22.20 9.22,20.28 8.79,21.69 8.35,19.74 7.92,20.50 7.49,20.58 7.06,20.12 6.63,19.28 6.20,19.38" fill="#1f70b0"/>
</svg>
<div class="a" style="left:1432px;top:542.5px;width:56.2px;height:3px;background:#10161a"></div>
<svg class="a" style="left:1432px;top:512.5px" width="56.2" height="30" viewBox="0 0 56 30" preserveAspectRatio="none">
<rect width="56" height="30" fill="#fbfcfc"/>
<path d="M22 1.6 H46 M4 5 H6 M4 9 H6 M4 13 H6 M4 17 H6 M4 21 H6 M4 25 H6 M8 27.5 H12 M17 27.5 H21 M26 27.5 H30 M35 27.5 H39 M44 27.5 H48" stroke="#c8c8c8" stroke-width="0.8"/>
<path d="M8.0 3 V25.5" stroke="#e4e4e4" stroke-width="0.35"/>
<path d="M12.2 3 V25.5" stroke="#e4e4e4" stroke-width="0.35"/>
<path d="M16.4 3 V25.5" stroke="#e4e4e4" stroke-width="0.35"/>
<path d="M20.6 3 V25.5" stroke="#e4e4e4" stroke-width="0.35"/>
<path d="M24.8 3 V25.5" stroke="#e4e4e4" stroke-width="0.35"/>
<path d="M29.0 3 V25.5" stroke="#e4e4e4" stroke-width="0.35"/>
<path d="M33.2 3 V25.5" stroke="#e4e4e4" stroke-width="0.35"/>
<path d="M37.4 3 V25.5" stroke="#e4e4e4" stroke-width="0.35"/>
<path d="M41.6 3 V25.5" stroke="#e4e4e4" stroke-width="0.35"/>
<path d="M45.8 3 V25.5" stroke="#e4e4e4" stroke-width="0.35"/>
<path d="M50.0 3 V25.5" stroke="#e4e4e4" stroke-width="0.35"/>
<path d="M54.2 3 V25.5" stroke="#e4e4e4" stroke-width="0.35"/>
<path d="M6.5 5.0 H54" stroke="#e4e4e4" stroke-width="0.35"/>
<path d="M6.5 9.0 H54" stroke="#e4e4e4" stroke-width="0.35"/>
<path d="M6.5 13.0 H54" stroke="#e4e4e4" stroke-width="0.35"/>
<path d="M6.5 17.0 H54" stroke="#e4e4e4" stroke-width="0.35"/>
<path d="M6.5 21.0 H54" stroke="#e4e4e4" stroke-width="0.35"/>
<path d="M6.5 25.0 H54" stroke="#e4e4e4" stroke-width="0.35"/>
<path d="M8.5 3.5 L9.5 24.5 H53" fill="none" stroke="#b8c4c8" stroke-width="0.5"/>
</svg>
<div class="a" style="left:1432px;top:576.5px;width:56.2px;height:3px;background:#10161a"></div>
<svg class="a" style="left:1432px;top:546.5px" width="56.2" height="30" viewBox="0 0 56 30" preserveAspectRatio="none">
<rect width="56" height="30" fill="#fbfcfc"/>
<path d="M22 1.6 H46 M4 5 H6 M4 9 H6 M4 13 H6 M4 17 H6 M4 21 H6 M4 25 H6 M8 27.5 H12 M17 27.5 H21 M26 27.5 H30 M35 27.5 H39 M44 27.5 H48" stroke="#c8c8c8" stroke-width="0.8"/>
<polygon points="6.20,8.54 6.63,9.88 7.06,10.40 7.49,8.81 7.92,8.93 8.35,7.98 8.79,6.07 9.22,7.06 9.65,8.38 10.08,9.63 10.51,11.06 10.94,10.70 11.37,9.11 11.80,8.31 12.23,7.02 12.66,7.54 13.09,9.00 13.53,11.17 13.96,11.64 14.39,10.62 14.82,11.50 15.25,11.12 15.68,12.11 16.11,11.90 16.54,10.94 16.97,11.41 17.40,10.76 17.83,11.40 18.27,11.65 18.70,11.81 19.13,11.81 19.56,11.41 19.99,10.97 20.42,11.78 20.85,11.07 21.28,12.37 21.71,12.32 22.14,12.17 22.57,10.60 23.01,11.72 23.44,10.56 23.87,9.97 24.30,11.15 24.73,10.65 25.16,9.32 25.59,10.83 26.02,9.98 26.45,10.47 26.88,9.27 27.31,9.46 27.75,10.39 28.18,9.03 28.61,10.01 29.04,8.41 29.47,9.64 29.90,9.62 30.33,9.04 30.76,8.62 31.19,7.71 31.62,8.94 32.05,7.98 32.49,8.97 32.92,7.96 33.35,9.38 33.78,8.45 34.21,9.73 34.64,9.96 35.07,9.37 35.50,9.36 35.93,10.12 36.36,9.80 36.79,10.83 37.23,11.14 37.66,10.82 38.09,10.12 38.52,10.83 38.95,11.33 39.38,11.72 39.81,10.95 40.24,12.24 40.67,10.94 41.10,11.37 41.53,12.21 41.97,12.52 42.40,11.95 42.83,12.65 43.26,11.94 43.69,12.56 44.12,13.27 44.55,13.25 44.98,12.90 45.41,13.25 45.84,11.70 46.27,12.89 46.71,12.88 47.14,13.17 47.57,12.97 48.00,11.57 48.43,13.04 48.86,12.92 49.29,13.44 49.72,12.40 50.15,11.64 50.58,10.42 51.01,8.65 51.45,8.65 51.88,9.54 52.31,10.40 52.74,11.19 53.17,11.16 53.60,11.72 53.60,17.15 53.17,18.35 52.74,18.00 52.31,17.84 51.88,17.34 51.45,17.02 51.01,17.87 50.58,17.69 50.15,18.27 49.72,18.36 49.29,18.21 48.86,18.25 48.43,19.46 48.00,18.61 47.57,19.42 47.14,18.37 46.71,18.39 46.27,17.94 45.84,18.78 45.41,19.11 44.98,17.74 44.55,18.88 44.12,17.64 43.69,18.06 43.26,18.62 42.83,19.00 42.40,19.29 41.97,18.32 41.53,18.87 41.10,17.87 40.67,17.02 40.24,17.56 39.81,17.52 39.38,16.25 38.95,16.06 38.52,16.19 38.09,16.22 37.66,16.05 37.23,15.65 36.79,15.37 36.36,15.33 35.93,14.92 35.50,16.32 35.07,14.95 34.64,15.81 34.21,15.61 33.78,15.32 33.35,15.40 32.92,14.19 32.49,13.27 32.05,14.52 31.62,15.07 31.19,13.87 30.76,15.29 30.33,13.84 29.90,15.26 29.47,14.38 29.04,15.93 28.61,16.11 28.18,15.31 27.75,15.09 27.31,15.45 26.88,14.76 26.45,15.50 26.02,15.69 25.59,16.02 25.16,16.96 24.73,16.42 24.30,17.50 23.87,17.67 23.44,16.17 23.01,17.46 22.57,17.97 22.14,17.66 21.71,16.94 21.28,17.49 20.85,17.03 20.42,18.79 19.99,17.37 19.56,18.56 19.13,18.65 18.70,17.78 18.27,18.06 17.83,17.64 17.40,17.47 16.97,18.06 16.54,17.50 16.11,16.95 15.68,17.44 15.25,17.80 14.82,17.19 14.39,17.18 13.96,16.93 13.53,17.50 13.09,16.19 12.66,15.78 12.23,16.72 11.80,17.41 11.37,17.30 10.94,16.33 10.51,17.15 10.08,16.08 9.65,16.33 9.22,15.66 8.79,15.42 8.35,16.66 7.92,16.70 7.49,16.05 7.06,14.69 6.63,15.68 6.20,15.81" fill="#7fb0d6" opacity="0.9"/>
<polygon points="6.20,17.52 6.63,18.00 7.06,19.10 7.49,17.91 7.92,18.23 8.35,19.20 8.79,18.74 9.22,18.37 9.65,18.79 10.08,18.72 10.51,19.48 10.94,19.71 11.37,19.83 11.80,19.24 12.23,19.22 12.66,19.51 13.09,19.13 13.53,19.65 13.96,19.50 14.39,19.47 14.82,20.54 15.25,19.64 15.68,19.71 16.11,20.16 16.54,20.26 16.97,19.89 17.40,20.12 17.83,20.91 18.27,20.06 18.70,20.37 19.13,21.17 19.56,20.30 19.99,20.34 20.42,20.63 20.85,20.56 21.28,19.77 21.71,19.50 22.14,20.79 22.57,19.44 23.01,19.85 23.44,20.07 23.87,19.92 24.30,19.88 24.73,18.52 25.16,18.57 25.59,18.32 26.02,19.16 26.45,18.63 26.88,19.21 27.31,18.40 27.75,18.72 28.18,18.31 28.61,18.63 29.04,17.23 29.47,16.96 29.90,16.85 30.33,17.53 30.76,16.47 31.19,17.31 31.62,17.32 32.05,17.47 32.49,17.23 32.92,17.47 33.35,17.26 33.78,17.65 34.21,17.08 34.64,17.64 35.07,17.36 35.50,17.88 35.93,18.06 36.36,18.22 36.79,19.12 37.23,18.35 37.66,19.23 38.09,19.69 38.52,18.87 38.95,19.54 39.38,19.89 39.81,20.67 40.24,20.80 40.67,20.56 41.10,20.15 41.53,21.03 41.97,21.52 42.40,21.31 42.83,21.48 43.26,21.00 43.69,20.74 44.12,21.26 44.55,21.33 44.98,21.82 45.41,20.47 45.84,21.18 46.27,20.66 46.71,21.56 47.14,21.38 47.57,20.57 48.00,20.70 48.43,21.98 48.86,20.70 49.29,21.06 49.72,21.26 50.15,20.52 50.58,20.20 51.01,21.40 51.45,20.69 51.88,19.97 52.31,20.31 52.74,20.50 53.17,21.04 53.60,20.65 53.60,25.88 53.17,25.77 52.74,25.52 52.31,25.93 51.88,25.96 51.45,26.00 51.01,25.30 50.58,25.53 50.15,26.54 49.72,26.74 49.29,25.45 48.86,26.25 48.43,26.59 48.00,25.54 47.57,26.77 47.14,26.15 46.71,25.84 46.27,25.78 45.84,26.38 45.41,25.61 44.98,25.83 44.55,25.90 44.12,26.17 43.69,25.98 43.26,26.68 42.83,25.72 42.40,25.46 41.97,25.44 41.53,25.41 41.10,26.50 40.67,25.14 40.24,25.97 39.81,24.66 39.38,24.81 38.95,24.48 38.52,24.22 38.09,24.74 37.66,23.96 37.23,23.44 36.79,23.12 36.36,23.82 35.93,23.33 35.50,22.54 35.07,23.10 34.64,23.46 34.21,23.12 33.78,23.15 33.35,21.81 32.92,21.74 32.49,22.56 32.05,22.37 31.62,21.31 31.19,21.99 30.76,22.35 30.33,22.17 29.90,22.13 29.47,22.91 29.04,22.17 28.61,23.26 28.18,23.54 27.75,22.94 27.31,23.03 26.88,23.46 26.45,22.90 26.02,24.36 25.59,24.21 25.16,24.06 24.73,23.64 24.30,24.38 23.87,24.61 23.44,25.30 23.01,24.43 22.57,25.62 22.14,25.01 21.71,25.87 21.28,24.91 20.85,24.93 20.42,25.60 19.99,25.29 19.56,25.85 19.13,25.17 18.70,24.74 18.27,25.13 17.83,25.01 17.40,24.70 16.97,25.46 16.54,25.51 16.11,24.97 15.68,25.78 15.25,24.54 14.82,24.55 14.39,24.45 13.96,24.09 13.53,24.71 13.09,24.94 12.66,23.74 12.23,24.68 11.80,24.52 11.37,24.75 10.94,23.95 10.51,23.37 10.08,24.28 9.65,24.50 9.22,24.32 8.79,24.25 8.35,23.70 7.92,24.05 7.49,23.69 7.06,23.92 6.63,23.55 6.20,22.72" fill="#f3b37a" opacity="0.9"/>
</svg>
<div class="a" style="left:1432px;top:610.4px;width:56.2px;height:3px;background:#10161a"></div>
<svg class="a" style="left:1432px;top:580.4px" width="56.2" height="30" viewBox="0 0 56 30" preserveAspectRatio="none">
<rect width="56" height="30" fill="#fbfcfc"/>
<path d="M22 1.6 H46 M4 5 H6 M4 9 H6 M4 13 H6 M4 17 H6 M4 21 H6 M4 25 H6 M8 27.5 H12 M17 27.5 H21 M26 27.5 H30 M35 27.5 H39 M44 27.5 H48" stroke="#c8c8c8" stroke-width="0.8"/>
<polyline points="7.0,17.6 7.7,11.5 8.5,8.3 9.2,10.5 9.9,17.5 10.7,18.6 11.4,8.0 12.1,7.3 12.8,15.4 13.6,16.5 14.3,13.0 15.0,10.0 15.8,16.8 16.5,6.2 17.2,11.4 17.9,14.3 18.7,23.3 19.4,17.6 20.1,21.9 20.9,14.6 21.6,10.2 22.3,10.4 23.1,23.3 23.8,18.7 24.5,11.5 25.2,6.4 26.0,15.0 26.7,18.1 27.4,13.6 28.2,10.6 28.9,18.0 29.6,22.7 30.4,10.1 31.1,6.6 31.8,12.1 32.5,13.6 33.3,18.3 34.0,9.6 34.7,20.3 35.5,19.3 36.2,15.1 36.9,9.7 37.7,23.5 38.4,11.6 39.1,20.8 39.9,10.2 40.6,10.0 41.3,19.7 42.0,11.3 42.8,23.1 43.5,14.9 44.2,9.4 45.0,10.0 45.7,13.5 46.4,18.0 47.1,23.1 47.9,8.6 48.6,13.1 49.3,9.8 50.1,23.5 50.8,8.6 51.5,6.9 52.3,7.1 53.0,13.1" fill="none" stroke="#a4a4e0" stroke-width="0.9" opacity="0.85"/>
</svg>
<div class="a" style="left:1432px;top:644.2px;width:56.2px;height:3px;background:#10161a"></div>
<svg class="a" style="left:1432px;top:614.2px" width="56.2" height="30" viewBox="0 0 56 30" preserveAspectRatio="none">
<rect width="56" height="30" fill="#fbfcfc"/>
<path d="M22 1.6 H46 M4 5 H6 M4 9 H6 M4 13 H6 M4 17 H6 M4 21 H6 M4 25 H6 M8 27.5 H12 M17 27.5 H21 M26 27.5 H30 M35 27.5 H39 M44 27.5 H48" stroke="#c8c8c8" stroke-width="0.8"/>
<polyline points="7.0,22.2 7.7,21.9 8.5,19.2 9.2,24.0 9.9,22.8 10.7,11.9 11.4,9.3 12.1,22.8 12.8,19.4 13.6,6.6 14.3,18.0 15.0,12.8 15.8,12.7 16.5,12.0 17.2,9.0 17.9,6.1 18.7,11.0 19.4,12.3 20.1,23.2 20.9,8.2 21.6,23.4 22.3,9.7 23.1,12.4 23.8,20.8 24.5,20.8 25.2,13.8 26.0,6.9 26.7,14.5 27.4,12.7 28.2,22.6 28.9,9.5 29.6,12.6 30.4,22.1 31.1,6.5 31.8,13.4 32.5,20.6 33.3,19.8 34.0,6.7 34.7,6.6 35.5,7.1 36.2,22.6 36.9,10.6 37.7,19.5 38.4,22.2 39.1,12.1 39.9,10.9 40.6,23.2 41.3,17.1 42.0,10.7 42.8,18.9 43.5,11.7 44.2,11.0 45.0,6.1 45.7,19.6 46.4,22.5 47.1,17.4 47.9,23.0 48.6,6.4 49.3,10.2 50.1,14.6 50.8,23.2 51.5,23.2 52.3,13.0 53.0,10.5" fill="none" stroke="#a4a4e0" stroke-width="0.9" opacity="0.85"/>
</svg>
<div class="a" style="left:1432px;top:678.2px;width:56.2px;height:3px;background:#10161a"></div>
<svg class="a" style="left:1432px;top:648.2px" width="56.2" height="30" viewBox="0 0 56 30" preserveAspectRatio="none">
<rect width="56" height="30" fill="#fbfcfc"/>
<path d="M22 1.6 H46 M4 5 H6 M4 9 H6 M4 13 H6 M4 17 H6 M4 21 H6 M4 25 H6 M8 27.5 H12 M17 27.5 H21 M26 27.5 H30 M35 27.5 H39 M44 27.5 H48" stroke="#c8c8c8" stroke-width="0.8"/>
<polyline points="7.0,13.7 7.7,14.9 8.5,22.7 9.2,9.3 9.9,20.4 10.7,19.3 11.4,20.8 12.1,19.9 12.8,16.9 13.6,11.9 14.3,11.8 15.0,12.5 15.8,20.1 16.5,7.4 17.2,9.6 17.9,19.6 18.7,10.5 19.4,7.2 20.1,6.6 20.9,15.9 21.6,11.9 22.3,23.6 23.1,21.9 23.8,23.8 24.5,10.8 25.2,7.5 26.0,7.7 26.7,15.0 27.4,18.8 28.2,14.0 28.9,10.2 29.6,13.5 30.4,17.2 31.1,18.1 31.8,19.5 32.5,21.2 33.3,18.0 34.0,8.2 34.7,21.1 35.5,11.3 36.2,16.2 36.9,12.7 37.7,19.3 38.4,9.6 39.1,10.5 39.9,10.4 40.6,8.8 41.3,21.9 42.0,16.4 42.8,11.9 43.5,13.1 44.2,23.9 45.0,15.1 45.7,10.2 46.4,20.6 47.1,17.8 47.9,23.8 48.6,7.8 49.3,14.5 50.1,20.7 50.8,21.1 51.5,22.5 52.3,6.7 53.0,11.3" fill="none" stroke="#a4a4e0" stroke-width="0.9" opacity="0.85"/>
</svg>
<div class="a" style="left:1431px;top:647.2px;width:58.2px;height:32px;border:2px solid #1d5f99;box-shadow:inset 0 0 0 1px #8cc8f0"></div>
<div class="a" style="left:609.5px;top:785.3px;width:76.0px;height:17.7px;background:#3e4c56;border-radius:3px"></div>
<div class="a ui" style="left:609.5px;top:788px;width:76.0px;font-size:9.7px;color:#d4d8dc;text-align:center;transform:scaleY(1.2);transform-origin:0 0">IPython Console</div>
<div class="a" style="left:687.5px;top:785.3px;width:26.5px;height:17.7px;background:#3e4c56;border-radius:3px"></div>
<div class="a ui" style="left:687.5px;top:788px;width:26.5px;font-size:9.7px;color:#d4d8dc;text-align:center;transform:scaleY(1.2);transform-origin:0 0">Files</div>
<div class="a" style="left:716px;top:785.3px;width:25px;height:17.7px;background:#3e4c56;border-radius:3px"></div>
<div class="a ui" style="left:716px;top:788px;width:25px;font-size:9.7px;color:#d4d8dc;text-align:center;transform:scaleY(1.2);transform-origin:0 0">Help</div>
<div class="a" style="left:743.5px;top:785.3px;width:81.5px;height:17.7px;background:#3e4c56;border-radius:3px"></div>
<div class="a ui" style="left:743.5px;top:788px;width:81.5px;font-size:9.7px;color:#d4d8dc;text-align:center;transform:scaleY(1.2);transform-origin:0 0">Variable Explorer</div>
<div class="a" style="left:827px;top:785.3px;width:28px;height:17.7px;background:#4a5d6a;border-radius:3px"></div>
<div class="a ui" style="left:827px;top:788px;width:28px;font-size:9.7px;color:#d4d8dc;text-align:center;transform:scaleY(1.2);transform-origin:0 0">Plots</div>
<div class="a" style="left:827.5px;top:784.3px;width:27px;height:3px;background:#2a8fd6;border-radius:2px 2px 0 0"></div>
<div class="a" style="left:856.5px;top:785.3px;width:37.5px;height:17.7px;background:#3e4c56;border-radius:3px"></div>
<div class="a ui" style="left:856.5px;top:788px;width:37.5px;font-size:9.7px;color:#d4d8dc;text-align:center;transform:scaleY(1.2);transform-origin:0 0">History</div>
<div class="a" style="left:0;top:804.5px;width:1500px;height:20px;background:#43525c"></div>
<div class="a" style="left:0;top:824px;width:1500px;height:3.5px;background:#e8eef2"></div>
<div class="a ui" style="left:958.7px;top:809.5px;font-size:10px;color:#dfe1e3">conda (Python 3.10.9)</div>
<div class="a ui" style="left:1085.6px;top:809.5px;font-size:10px;color:#dfe1e3">Completions: conda</div>
<div class="a ui" style="left:1201.5px;top:809.5px;font-size:10px;color:#dfe1e3">LSP: Python</div>
<div class="a ui" style="left:1267px;top:809.5px;font-size:10px;color:#dfe1e3">Line 30, Col 59</div>
<div class="a ui" style="left:1346px;top:809.5px;font-size:10px;color:#dfe1e3">ASCII</div>
<div class="a ui" style="left:1383.5px;top:809.5px;font-size:10px;color:#dfe1e3">CRLF</div>
<div class="a ui" style="left:1418px;top:809.5px;font-size:10px;color:#dfe1e3">RW</div>
<svg class="a" style="left:1068px;top:810px" width="9" height="10" viewBox="0 0 9 10"><path d="M1 5 L4 8 L8 3" fill="none" stroke="#dfe1e3" stroke-width="1.2"/><path d="M3 1 L5 3" stroke="#dfe1e3" stroke-width="1"/></svg>
<svg class="a" style="left:1185px;top:810px" width="10" height="9" viewBox="0 0 10 9"><path d="M1 4.5 L4 7.5 L9 1.5" fill="none" stroke="#dfe1e3" stroke-width="1.2"/></svg>
<div class="a" style="left:1432px;top:788.3px;width:63px;height:31.3px;background:#2c2e30"></div>
<div class="a" style="left:1463px;top:788.3px;width:1px;height:31.3px;background:#1a1c1e"></div>
<div class="a" style="left:1440.7px;top:797px;width:5.3px;height:14.7px;background:#bdbdbd"></div>
<div class="a" style="left:1449.3px;top:797px;width:5.4px;height:14.7px;background:#bdbdbd"></div>
<svg class="a" style="left:1470px;top:797px" width="19" height="15" viewBox="0 0 19 15"><rect x="0.7" y="0.7" width="17.6" height="13.6" fill="none" stroke="#b0b0b0" stroke-width="1.3"/><ellipse cx="9.5" cy="5.8" rx="2" ry="2.8" fill="#bdbdbd"/><path d="M3.5 14 Q4 9.5 9.5 9.5 Q15 9.5 15.5 14 Z" fill="#bdbdbd"/></svg>
<svg class="a" style="left:164.9px;top:309.8px" width="14" height="21" viewBox="0 0 12 18"><path d="M0.8 0.8 V14.5 L4 11.5 L6.5 17 L8.5 16 L6 10.8 H10.5 Z" fill="#fff" stroke="#111" stroke-width="1"/></svg>
<svg class="a" style="left:653.9px;top:782px" width="14" height="21" viewBox="0 0 12 18"><path d="M0.8 0.8 V14.5 L4 11.5 L6.5 17 L8.5 16 L6 10.8 H10.5 Z" fill="#fff" stroke="#111" stroke-width="1"/></svg>
</body></html>
